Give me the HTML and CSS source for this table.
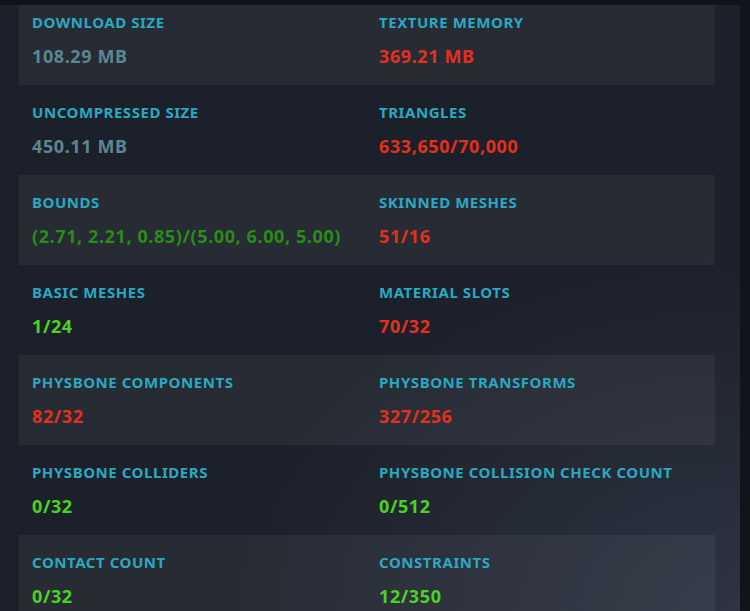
FILE: index.html
```html
<!DOCTYPE html>
<html lang="en">
<head>
<meta charset="utf-8">
<title>Avatar performance stats</title>
<link rel="stylesheet" href="styles.css">
</head>
<body>
<div class="frame">
  <div class="topbar"></div>
  <div class="main">
    <div class="panel">
      <div class="scroll">
        <div class="list">
          <div class="row">
            <div class="stat"><div class="label">Download Size</div><div class="value grey">108.29 MB</div></div>
            <div class="stat"><div class="label">Texture Memory</div><div class="value red">369.21 MB</div></div>
          </div>
          <div class="row">
            <div class="stat"><div class="label">Uncompressed Size</div><div class="value grey">450.11 MB</div></div>
            <div class="stat"><div class="label">Triangles</div><div class="value red">633,650/70,000</div></div>
          </div>
          <div class="row">
            <div class="stat"><div class="label">Bounds</div><div class="value dgreen">(2.71, 2.21, 0.85)/(5.00, 6.00, 5.00)</div></div>
            <div class="stat"><div class="label">Skinned Meshes</div><div class="value red">51/16</div></div>
          </div>
          <div class="row">
            <div class="stat"><div class="label">Basic Meshes</div><div class="value green">1/24</div></div>
            <div class="stat"><div class="label">Material Slots</div><div class="value red">70/32</div></div>
          </div>
          <div class="row">
            <div class="stat"><div class="label">PhysBone Components</div><div class="value red">82/32</div></div>
            <div class="stat"><div class="label">PhysBone Transforms</div><div class="value red">327/256</div></div>
          </div>
          <div class="row">
            <div class="stat"><div class="label">PhysBone Colliders</div><div class="value green">0/32</div></div>
            <div class="stat"><div class="label">PhysBone Collision Check Count</div><div class="value green">0/512</div></div>
          </div>
          <div class="row">
            <div class="stat"><div class="label">Contact Count</div><div class="value green">0/32</div></div>
            <div class="stat"><div class="label">Constraints</div><div class="value green">12/350</div></div>
          </div>
        </div>
      </div>
    </div>
    <div class="track"></div>
  </div>
</div>
</body>
</html>
```
FILE: styles.css
```css
* { box-sizing: border-box; }
html, body {
  margin: 0;
  padding: 0;
  height: 100%;
  background: #10141b;
  overflow: hidden;
}
body {
  font-family: "Noto Sans", "Open Sans", sans-serif;
}
.frame {
  display: flex;
  flex-direction: column;
  height: 611px;
}
.topbar {
  height: 5px;
  flex: none;
  background: #10131a;
}
.main {
  flex: 1;
  display: flex;
  min-height: 0;
}
.panel {
  width: 740px;
  flex: none;
  background:
    radial-gradient(ellipse 70% 60% at 100% 100%, rgba(70,76,96,0.45), rgba(70,76,96,0) 100%),
    #1b202a;
  overflow: hidden;
}
.track {
  flex: 1;
  background: #10141b;
}
.scroll {
  padding: 0 25px 0 19px;
}
.list {
  margin-top: -10px;
}
.row {
  display: grid;
  grid-template-columns: 1fr 1fr;
  column-gap: 24px;
  height: 90px;
  padding: 17px 13px 0;
}
.row:nth-child(odd) {
  background: rgba(255,255,255,0.052);
}
.label {
  font-size: 15px;
  line-height: 20px;
  font-weight: 700;
  letter-spacing: 0.55px;
  text-transform: uppercase;
  color: #2aa9c1;
  white-space: nowrap;
}
.value {
  margin-top: 13px;
  font-size: 18px;
  line-height: 22px;
  font-weight: 700;
  letter-spacing: 0.6px;
  white-space: nowrap;
}
.grey { color: #5c8690; }
.red { color: #e2301d; }
.green { color: #4bd321; }
.dgreen { color: #2a8c19; }
```
